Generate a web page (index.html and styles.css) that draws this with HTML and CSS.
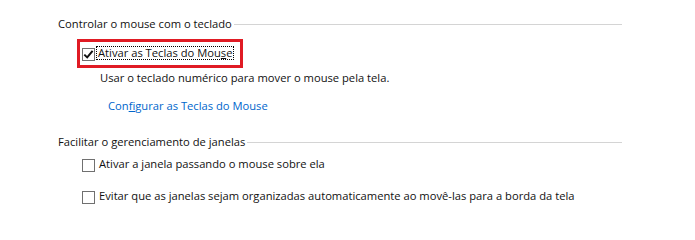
FILE: index.html
```html
<!DOCTYPE html>
<html lang="pt-BR">
<head>
<meta charset="utf-8">
<title>Facilidade de Acesso</title>
<link rel="stylesheet" href="styles.css">
</head>
<body>
<div class="panel">
  <div class="section-title"><span>Controlar o mouse com o teclado</span><span class="rule"></span></div>
  <div class="check-row first">
    <span class="box checked"><svg width="11" height="11" viewBox="0 0 11 11"><path d="M1.3 5.6 L4.2 8.4 L9.6 1.8" fill="none" stroke="#111" stroke-width="2"/></svg></span>
    <span class="label focus">Ativar as Teclas do Mou<u>s</u>e</span>
  </div>
  <div class="desc">Usar o teclado numérico para mover o mouse pela tela.</div>
  <div class="link">Con<u>f</u>igurar as Teclas do Mouse</div>
  <div class="section-title second"><span>Facilitar o gerenciamento de janelas</span><span class="rule"></span></div>
  <div class="check-row row2">
    <span class="box"></span>
    <span class="label">Ativar a <u>j</u>anela passando o mouse sobre ela</span>
  </div>
  <div class="check-row row3">
    <span class="box"></span>
    <span class="label">Evitar que as janelas sejam organizadas automaticamente ao movê-las para a borda da tela</span>
  </div>
  <div class="highlight"></div>
</div>
</body>
</html>
```

FILE: styles.css
```css
html, body {
  margin: 0;
  padding: 0;
  background: #ffffff;
}

body {
  width: 695px;
  height: 215px;
  overflow: hidden;
  font-family: "Open Sans", "Noto Sans", sans-serif;
  font-size: 11.2px;
  color: #111111;
}

.panel {
  position: relative;
  padding: 16px 0 0 58px;
  width: 564px;
}

.section-title {
  display: flex;
  align-items: center;
  height: 16px;
  line-height: 16px;
  white-space: nowrap;
}

.section-title .rule {
  flex: 1;
  height: 0;
  border-top: 1px solid #d4d4d4;
  margin-left: 2px;
  margin-top: 1px;
}

.section-title.second {
  margin-top: 20px;
}

.check-row {
  display: flex;
  align-items: center;
  height: 16px;
  line-height: 16px;
  margin-left: 24px;
  white-space: nowrap;
}

.check-row.first { margin-top: 13px; }
.check-row.row2 { margin-top: 6px; }
.check-row.row3 { margin-top: 16px; }

.box {
  width: 11px;
  height: 11px;
  border: 1px solid #707070;
  background: #fff;
  display: flex;
  align-items: center;
  justify-content: center;
  margin-top: 2px;
  flex: none;
}

.label {
  margin-left: 4px;
}

.label.focus {
  margin-left: 2px;
  padding: 0 1px;
  line-height: 12px;
  outline: 1px dotted #000;
}

.label u, .link u {
  text-decoration: underline;
}

.desc {
  margin: 9px 0 0 42px;
  height: 16px;
  line-height: 16px;
}

.link {
  margin: 12px 0 0 50px;
  height: 16px;
  line-height: 16px;
  color: #0066cc;
}

.highlight {
  position: absolute;
  left: 77px;
  top: 39px;
  width: 160px;
  height: 23px;
  border: 3px solid #e01b24;
}
```
